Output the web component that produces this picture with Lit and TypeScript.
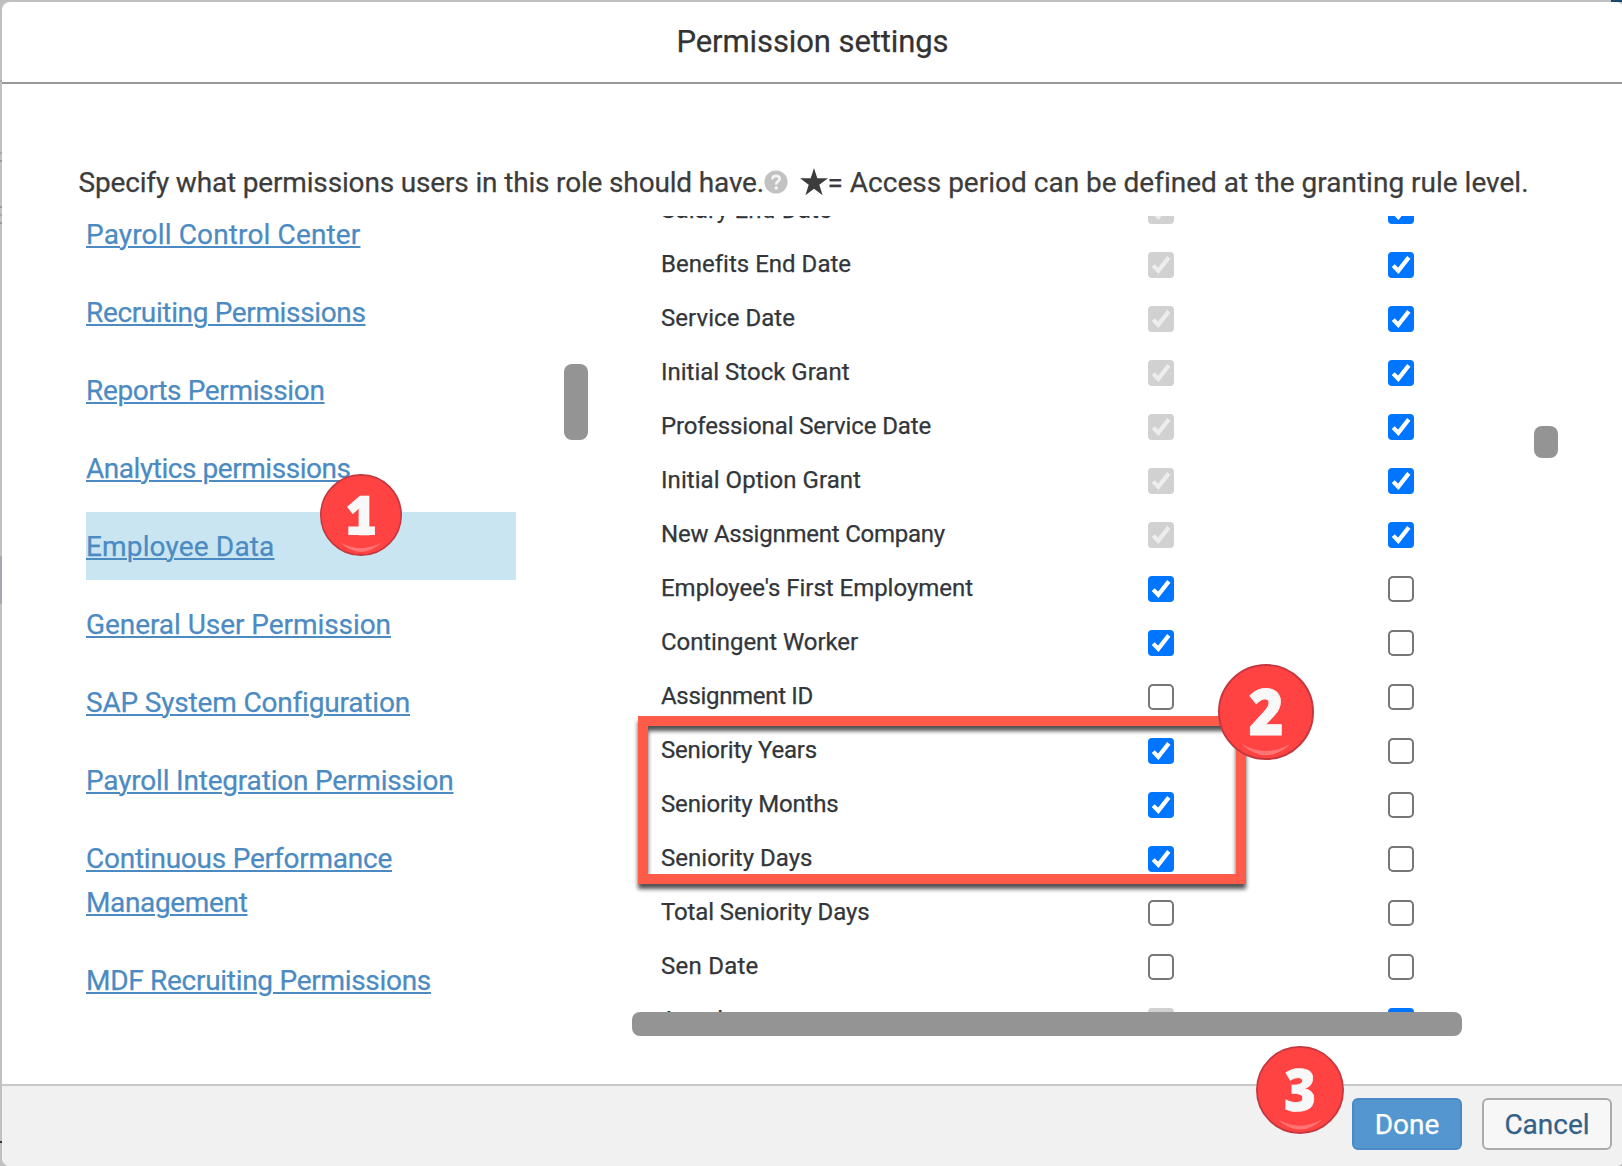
import { LitElement, html, svg, css, nothing } from "lit";
import { customElement, property } from "lit/decorators.js";
import { classMap } from "lit/directives/class-map.js";

/** One line of text whose tracking is adjusted so that it spans `span` pixels. */
@customElement("fit-text")
class FitText extends LitElement {
  static styles = css`
    :host { display: inline-block; white-space: nowrap; }
  `;
  @property() text = "";
  @property({ type: Number }) span = 0;

  render() {
    return html`<span>${this.text}</span>`;
  }

  updated() {
    const el = this.renderRoot.querySelector("span") as HTMLElement;
    el.style.letterSpacing = "0px";
    const width = el.getBoundingClientRect().width;
    if (this.span > 0 && width > 0) {
      el.style.letterSpacing = `${((this.span - width) / this.text.length).toFixed(3)}px`;
    }
  }
}

type CheckState = "off" | "on" | "locked";

@customElement("check-box")
class CheckBox extends LitElement {
  static styles = css`
    :host { display: block; width: 26px; height: 26px; }
    svg { display: block; }
  `;
  @property() state: CheckState = "off";

  render() {
    const off = this.state === "off";
    const locked = this.state === "locked";
    return html`<svg width="26" height="26" viewBox="0 0 26 26">
      ${off
        ? svg`<rect x="1" y="1" width="24" height="24" rx="4" fill="#fff" stroke="#767676" stroke-width="2"/>`
        : svg`<rect width="26" height="26" rx="4" fill=${locked ? "#d1d1d1" : "#0075ff"}/>
            <path d="M5.2 13.6 L10.3 18.8 L20.8 5.4" fill="none" stroke=${locked ? "#ededed" : "#fff"} stroke-width="4.2"/>`}
    </svg>`;
  }
}

@customElement("step-badge")
class StepBadge extends LitElement {
  static styles = css`
    :host { display: block; }
    svg { display: block; width: 100%; height: 100%; }
    .digit { font: 800 67px "Open Sans", "Noto Sans", sans-serif; fill: #f8f8f8; stroke: #f8f8f8; stroke-width: 0.8; }
  `;
  @property() value = "";

  render() {
    const one = this.value === "1";
    return html`<svg viewBox="0 0 100 100">
      <circle cx="50" cy="50" r="49" fill="#ff4343" stroke="#c5373f" stroke-width="2" />
      <path d="M24 83 Q50 107 76 83 Q50 98 24 83Z" fill="#ff7474" />
      <g transform=${`translate(${one ? 49.5 : 50} 74) scale(.93 1)`}>
        <text class="digit" text-anchor="middle">${this.value}</text>
      </g>
      ${one ? svg`<rect x="34.5" y="64" width="32.5" height="10.4" fill="#f8f8f8"/>` : nothing}
    </svg>`;
  }
}

interface Link { lines: [string, number][]; selected?: boolean }
interface Row { label: string; span: number; view: CheckState; edit: CheckState }

const LINKS: Link[] = [
  { lines: [["Payroll Control Center", 274.5]] },
  { lines: [["Recruiting Permissions", 279.5]] },
  { lines: [["Reports Permission", 238.5]] },
  { lines: [["Analytics permissions", 264.5]] },
  { lines: [["Employee Data", 188.5]], selected: true },
  { lines: [["General User Permission", 305]] },
  { lines: [["SAP System Configuration", 323]] },
  { lines: [["Payroll Integration Permission", 367.5]] },
  { lines: [["Continuous Performance", 306], ["Management", 161.5]] },
  { lines: [["MDF Recruiting Permissions", 345]] },
];

const row = (label: string, span: number, view: CheckState, edit: CheckState): Row => ({ label, span, view, edit });

const ROWS: Row[] = [
  row("Salary End Date", 171, "locked", "on"),
  row("Benefits End Date", 189.2, "locked", "on"),
  row("Service Date", 134, "locked", "on"),
  row("Initial Stock Grant", 188.5, "locked", "on"),
  row("Professional Service Date", 270, "locked", "on"),
  row("Initial Option Grant", 200, "locked", "on"),
  row("New Assignment Company", 284, "locked", "on"),
  row("Employee's First Employment", 312, "on", "off"),
  row("Contingent Worker", 197, "on", "off"),
  row("Assignment ID", 152, "off", "off"),
  row("Seniority Years", 156, "on", "off"),
  row("Seniority Months", 177.5, "on", "off"),
  row("Seniority Days", 151.5, "on", "off"),
  row("Total Seniority Days", 208.5, "off", "off"),
  row("Sen Date", 97.5, "off", "off"),
  row("Actual", 61, "locked", "on"),
];

@customElement("app-root")
class AppRoot extends LitElement {
  static styles = css`
    * { box-sizing: border-box; }
    :host {
      display: block; position: relative; width: 1622px; height: 1166px; overflow: hidden;
      padding: 2px 0 0 2px; font-family: Roboto, "Liberation Sans", sans-serif;
      -webkit-text-stroke-width: 0.25px;
      background:
        linear-gradient(#174a70, #174a70) 1611px 0 / 11px 2px no-repeat,
        linear-gradient(#a8a8a8, #a8a8a8) 0 80px / 2px 2px no-repeat,
        linear-gradient(#a8a8a8, #a8a8a8) 0 152px / 2px 2px no-repeat,
        linear-gradient(#999, #999) 0 160px / 2px 2px no-repeat,
        linear-gradient(#999, #999) 0 206px / 2px 2px no-repeat,
        linear-gradient(#a8a8a8, #a8a8a8) 0 214px / 2px 2px no-repeat,
        linear-gradient(#999, #999) 0 222px / 2px 2px no-repeat,
        linear-gradient(#a4a8b0, #a4a8b0) 0 556px / 2px 48px no-repeat,
        linear-gradient(#333, #333) 0 1141px / 2px 2px no-repeat,
        #c0c0c0;
    }
    .dialog {
      height: 1164px; display: flex; flex-direction: column; overflow: hidden;
      background: #fff; border-radius: 8px;
    }
    .header {
      flex: none; height: 82px; border-bottom: 2px solid #999; padding: 18px 1px 0 0;
      text-align: center; font-size: 31px; line-height: 44px; color: #333;
    }
    .content { flex: 1; min-height: 0; padding: 77px 0 0 76.5px; }
    .intro { display: flex; align-items: center; height: 44px; font-size: 28px; line-height: 44px; color: #3c3c3c; }
    .help { flex: none; margin-bottom: 2px; }
    .star { flex: none; margin: 0 0 2px 11.5px; }
    .panes { display: flex; margin-top: 11px; height: 820px; padding-left: 7.5px; }
    .nav { width: 430px; height: 796px; overflow: hidden; }
    .items { display: flex; flex-direction: column; gap: 10px; margin-top: -16px; }
    .link { padding: 13px 0 11px; font-size: 28px; line-height: 44px; color: #4c8bc2; }
    .link.selected { background: #c9e5f1; }
    .line {
      height: 44px; text-decoration: underline; text-decoration-thickness: 2px;
      text-underline-offset: 2px;
    }
    fit-text.u { display: inline; }
    .thumb { border-radius: 8px; background: #949494; flex: none; }
    .nav-thumb { width: 24px; height: 76px; margin: 148px 44px 0 48px; }
    .table { width: 830px; }
    .rows { height: 796px; overflow: hidden; }
    .stack { margin-top: -32px; }
    .row {
      display: grid; grid-template-columns: 487px 240px 26px; align-items: center;
      height: 54px; padding-left: 29px; font-size: 24px; line-height: 34px; color: #32363a;
    }
    .label { padding-bottom: 3px; }
    .h-thumb { height: 24px; }
    .v-thumb { width: 24px; height: 32px; margin: 210px 0 0 72px; }
    .footer {
      flex: none; height: 82px; display: flex; justify-content: flex-end; gap: 20px;
      padding: 12px 12px 0 0; border-top: 2px solid #c8c8c8; background: #f1f1f1;
    }
    .btn {
      height: 52px; border: 2px solid; border-radius: 6px; padding: 1px 0 0;
      font: 28px/47px Roboto, "Liberation Sans", sans-serif; text-align: center;
      -webkit-text-stroke-width: 0.25px;
    }
    .done { width: 110px; background: #5496cf; border-color: #4a8bc5; color: #fff; }
    .cancel { width: 130px; background: #f7f7f7; border-color: #ababab; color: #346187; }
    .mark {
      position: absolute; left: 638px; top: 716px; width: 608px; height: 168px;
      border: 10px solid #ff5b4b; filter: drop-shadow(0 5px 2px rgba(0, 0, 0, .68));
    }
    .badge { position: absolute; }
    .one { left: 320px; top: 474px; width: 82px; height: 82px; }
    .two { left: 1218px; top: 664px; width: 96px; height: 96px; }
    .three { left: 1256px; top: 1046px; width: 88px; height: 88px; }
  `;

  render() {
    return html`
      <div class="dialog">
        <div class="header"><fit-text text="Permission settings" span="272"></fit-text></div>
        <div class="content">
          <div class="intro">
            <fit-text text="Specify what permissions users in this role should have." span="685.5"></fit-text>
            <svg class="help" width="24" height="24" viewBox="0 0 24 24">
              <circle cx="12" cy="12" r="11.6" fill="#c2c2c2" />
              <path d="M8.4 9.2 C8.4 4.6 15.8 4.8 15.6 9 C15.5 11.6 12.2 11.4 12.2 14.4" fill="none" stroke="#f4f4f4" stroke-width="2.8" />
              <circle cx="12.2" cy="18" r="1.7" fill="#f4f4f4" />
            </svg>
            <svg class="star" width="28" height="28" viewBox="0 0 28 28">
              <path d="M14 0 L17.3 10.3 H28 L19.3 16.7 L22.6 27.2 L14 20.7 L5.4 27.2 L8.7 16.7 L0 10.3 H10.7Z" fill="#3c3c3c" />
            </svg>
            <fit-text text="= Access period can be defined at the granting rule level." span="700"></fit-text>
          </div>
          <div class="panes">
            <div class="nav">
              <div class="items">
                ${LINKS.map((l) => html`<div class=${classMap({ link: true, selected: !!l.selected })}>
                  ${l.lines.map(([t, w]) => html`<div class="line"><fit-text class="u" text=${t} span=${w}></fit-text></div>`)}
                </div>`)}
              </div>
            </div>
            <div class="thumb nav-thumb"></div>
            <div class="table">
              <div class="rows">
                <div class="stack">
                  ${ROWS.map((r) => html`<div class="row">
                    <div class="label"><fit-text text=${r.label} span=${r.span}></fit-text></div>
                    <check-box state=${r.view}></check-box>
                    <check-box state=${r.edit}></check-box>
                  </div>`)}
                </div>
              </div>
              <div class="thumb h-thumb"></div>
            </div>
            <div class="thumb v-thumb"></div>
          </div>
        </div>
        <div class="footer">
          <button class="btn done">Done</button>
          <button class="btn cancel">Cancel</button>
        </div>
      </div>
      <div class="mark"></div>
      <step-badge class="badge one" value="1"></step-badge>
      <step-badge class="badge two" value="2"></step-badge>
      <step-badge class="badge three" value="3"></step-badge>
    `;
  }
}
